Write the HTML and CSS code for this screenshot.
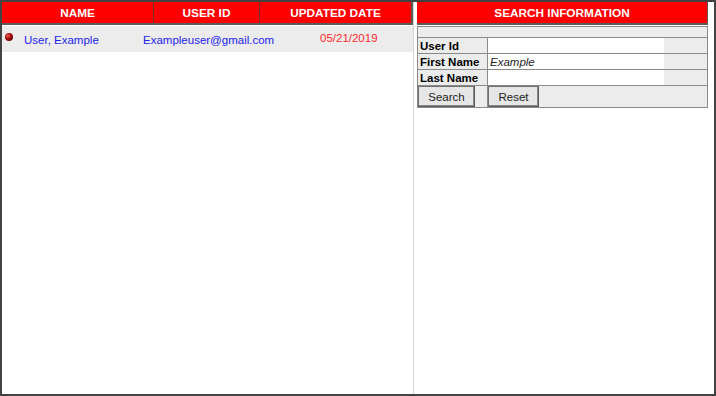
FILE: index.html
```html
<!DOCTYPE html>
<html>
<head>
<meta charset="utf-8">
<link rel="stylesheet" href="styles.css">
</head>
<body>
<div class="frame">
  <div class="left">
    <div class="list-head">
      <div class="lh-col lh-name">NAME</div>
      <div class="lh-col lh-id">USER ID</div>
      <div class="lh-col lh-date">UPDATED DATE</div>
    </div>
    <div class="list-row">
      <span class="bullet"></span>
      <span class="cell-name">User, Example</span>
      <span class="cell-id">Exampleuser@gmail.com</span>
      <span class="cell-date">05/21/2019</span>
    </div>
  </div>
  <div class="divider"></div>
  <div class="right">
    <div class="search-head">SEARCH INFORMATION</div>
    <div class="search-grid">
      <div class="sg-blank"></div>
      <div class="sg-label">User Id</div>
      <div class="sg-value"><div class="field"></div></div>
      <div class="sg-label">First Name</div>
      <div class="sg-value"><div class="field italic">Example</div></div>
      <div class="sg-label">Last Name</div>
      <div class="sg-value"><div class="field"></div></div>
      <div class="sg-btncell"><button class="btn btn-search">Search</button></div>
      <div class="sg-btncell"><button class="btn btn-reset">Reset</button></div>
    </div>
  </div>
</div>
</body>
</html>
```
FILE: styles.css
```css
html, body {
  margin: 0;
  padding: 0;
  background: #ffffff;
}
body {
  font-family: "Liberation Sans", Arial, sans-serif;
  font-size: 11.5px;
}
.frame {
  width: 716px;
  height: 396px;
  box-sizing: border-box;
  border: 2px solid #424242;
  display: flex;
}
.left {
  width: 411px;
  flex: none;
}
.divider {
  width: 1px;
  background: #d6d6d6;
  flex: none;
}
.right {
  flex: 1;
  padding: 0 6px 0 3px;
}
.list-head {
  height: 21px;
  background: #ff0000;
  border-bottom: 2px solid #5a5a5a;
  border-right: 2px solid #5a5a5a;
  display: flex;
  color: #ffffff;
  font-weight: bold;
  font-size: 11.8px;
}
.lh-col {
  display: flex;
  align-items: center;
  justify-content: center;
}
.lh-name {
  width: 151px;
  border-right: 1px solid #6a3030;
}
.lh-id {
  width: 105px;
  border-right: 1px solid #6a3030;
}
.lh-date {
  flex: 1;
}
.list-row {
  margin-top: 1px;
  height: 26px;
  background: #ececec;
  display: flex;
  align-items: flex-start;
  padding-left: 3px;
}
.bullet {
  width: 8px;
  height: 8px;
  border-radius: 50%;
  background: radial-gradient(circle at 35% 35%, #e86060 0%, #a00000 45%, #4a0000 100%);
  margin-top: 7px;
  margin-right: 11px;
  flex: none;
}
.cell-name {
  width: 119px;
  color: #2222ee;
  margin-top: 8px;
}
.cell-id {
  width: 177px;
  color: #2222ee;
  margin-top: 8px;
}
.cell-date {
  color: #ff2a2a;
  margin-top: 6px;
}
.search-head {
  height: 21px;
  background: #ff0000;
  border-bottom: 2px solid #5a5a5a;
  border-right: 1px solid #5a5a5a;
  color: #ffffff;
  font-weight: bold;
  font-size: 11.8px;
  display: flex;
  align-items: center;
  justify-content: center;
}
.search-grid {
  margin-top: 1px;
  display: grid;
  grid-template-columns: 70px 1fr;
  grid-template-rows: 11px 16px 16px 16px 22px;
  background: #ececec;
  border-left: 1px solid #8a8a8a;
  border-top: 1px solid #8a8a8a;
}
.search-grid > div {
  border-right: 1px solid #8a8a8a;
  border-bottom: 1px solid #8a8a8a;
  box-sizing: border-box;
}
.sg-blank {
  grid-column: 1 / 3;
}
.sg-label {
  font-weight: bold;
  color: #000000;
  padding-left: 2px;
  display: flex;
  align-items: center;
  line-height: 14px;
}
.sg-value {
  display: flex;
}
.field {
  width: 176px;
  background: #ffffff;
  display: flex;
  align-items: center;
  padding-left: 2px;
  box-sizing: border-box;
  color: #222222;
}
.field.italic {
  font-style: italic;
}
.sg-btncell {
  display: flex;
  align-items: stretch;
}
.btn {
  font-family: "Liberation Sans", Arial, sans-serif;
  font-size: 11.5px;
  color: #222222;
  background: #e6e6e6;
  border: 1px solid #707070;
  border-right-color: #5a5a5a;
  border-bottom-color: #5a5a5a;
  padding: 0;
  margin: 0;
  box-shadow: inset -1px -1px 0 #8a8a8a;
}
.btn-search {
  width: 57px;
}
.btn-reset {
  width: 51px;
}
```
